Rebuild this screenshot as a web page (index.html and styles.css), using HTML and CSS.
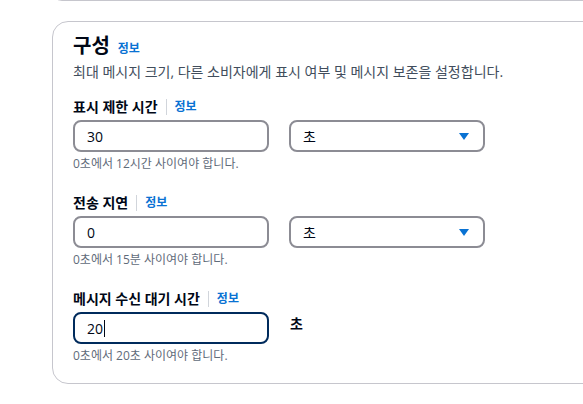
FILE: index.html
```html
<!DOCTYPE html>
<html lang="ko">
<head>
<meta charset="utf-8">
<link rel="stylesheet" href="styles.css">
</head>
<body>
<div class="page">
  <div class="prev-card"></div>
  <section class="card">
    <header class="card-header">
      <h2 class="title">구성 <a class="info info-title">정보</a></h2>
      <p class="desc">최대 메시지 크기, 다른 소비자에게 표시 여부 및 메시지 보존을 설정합니다.</p>
    </header>
    <div class="fields">
      <div class="field">
        <div class="label-row"><span class="label">표시 제한 시간</span><span class="sep"></span><a class="info">정보</a></div>
        <div class="controls">
          <div class="input">30</div>
          <div class="select"><span>초</span>
            <svg class="caret" width="10" height="7" viewBox="0 0 10 7"><path d="M0 0H10L5 7Z" fill="#0972d3"/></svg>
          </div>
        </div>
        <div class="hint">0초에서 12시간 사이여야 합니다.</div>
      </div>
      <div class="field">
        <div class="label-row"><span class="label">전송 지연</span><span class="sep"></span><a class="info">정보</a></div>
        <div class="controls">
          <div class="input">0</div>
          <div class="select"><span>초</span>
            <svg class="caret" width="10" height="7" viewBox="0 0 10 7"><path d="M0 0H10L5 7Z" fill="#0972d3"/></svg>
          </div>
        </div>
        <div class="hint">0초에서 15분 사이여야 합니다.</div>
      </div>
      <div class="field">
        <div class="label-row"><span class="label">메시지 수신 대기 시간</span><span class="sep"></span><a class="info">정보</a></div>
        <div class="controls">
          <div class="input focused">20<span class="cursor"></span></div>
          <div class="unit">초</div>
        </div>
        <div class="hint">0초에서 20초 사이여야 합니다.</div>
      </div>
    </div>
  </section>
</div>
</body>
</html>
```
FILE: styles.css
```css
html, body {
  margin: 0;
  padding: 0;
  background: #ffffff;
  overflow: hidden;
}
body {
  font-family: "Open Sans", "Noto Sans CJK KR", sans-serif;
  color: #000716;
  font-size: 14px;
}
.page {
  padding-left: 52px;
  overflow: hidden;
}
.prev-card {
  box-sizing: border-box;
  width: calc(100% + 24px);
  height: 20px;
  margin-top: -19px;
  border: 1px solid #c6c6cd;
  border-radius: 16px;
}
.card {
  box-sizing: border-box;
  width: calc(100% + 24px);
  margin-top: 20px;
  border: 1px solid #c6c6cd;
  border-radius: 16px;
  padding: 12px 20px 19px 20px;
}
.card-header {
  margin-bottom: 16px;
}
.title {
  margin: 0;
  font-size: 20px;
  line-height: 24px;
  font-weight: 700;
  display: flex;
  align-items: baseline;
}
.info {
  color: #0972d3;
  font-size: 12px;
  font-weight: 700;
  line-height: 16px;
  text-decoration: none;
}
.info-title {
  margin-left: 8px;
}
.desc {
  margin: 4px 0 0 0;
  font-size: 14px;
  line-height: 20px;
  color: #414d5c;
}
.fields {
  display: flex;
  flex-direction: column;
  gap: 22px;
}
.label-row {
  display: flex;
  align-items: center;
  height: 18px;
  margin-bottom: 4px;
}
.label {
  font-size: 14px;
  font-weight: 700;
  line-height: 18px;
}
.sep {
  width: 1px;
  height: 16px;
  background: #d1d5db;
  margin: 0 8px;
}
.controls {
  display: grid;
  grid-template-columns: 196px 196px;
  column-gap: 20px;
}
.input, .select {
  box-sizing: border-box;
  height: 32px;
  border: 2px solid #8c8c94;
  border-radius: 8px;
  padding: 0 12px;
  display: flex;
  align-items: center;
  font-size: 14px;
  color: #000716;
}
.input.focused {
  border-color: #002b5c;
}
.cursor {
  display: inline-block;
  width: 1px;
  height: 17px;
  background: #000716;
  margin-left: 1px;
}
.select {
  justify-content: space-between;
  padding-right: 14px;
}
.unit {
  font-weight: 700;
  line-height: 20px;
  padding: 2px 0 0 1px;
}
.hint {
  margin-top: 4px;
  font-size: 12px;
  line-height: 16px;
  color: #5f6b7a;
}
```
